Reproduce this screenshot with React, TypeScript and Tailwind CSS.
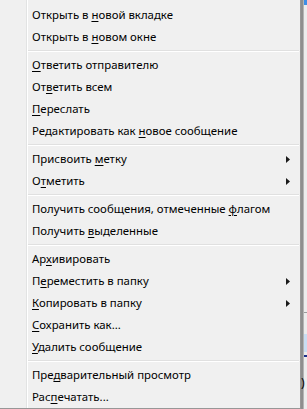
import React from "react";

type Item = { pre: string; key: string; post: string; sub?: boolean };

const groups: Item[][] = [
  [
    { pre: "Открыть в ", key: "н", post: "овой вкладке" },
    { pre: "Открыть в ", key: "н", post: "овом окне" },
  ],
  [
    { pre: "", key: "О", post: "тветить отправителю" },
    { pre: "От", key: "в", post: "етить всем" },
    { pre: "", key: "П", post: "ереслать" },
    { pre: "Редактировать как ", key: "н", post: "овое сообщение" },
  ],
  [
    { pre: "Присвоить ", key: "м", post: "етку", sub: true },
    { pre: "О", key: "т", post: "метить", sub: true },
  ],
  [
    { pre: "Получить сообщения, отмеченные ", key: "ф", post: "лагом" },
    { pre: "Получить ", key: "в", post: "ыделенные" },
  ],
  [
    { pre: "Ар", key: "х", post: "ивировать" },
    { pre: "П", key: "е", post: "реместить в папку", sub: true },
    { pre: "", key: "К", post: "опировать в папку", sub: true },
    { pre: "", key: "С", post: "охранить как..." },
    { pre: "", key: "У", post: "далить сообщение" },
  ],
  [
    { pre: "Пре", key: "д", post: "варительный просмотр" },
    { pre: "Рас", key: "п", post: "ечатать..." },
  ],
];

function Arrow() {
  return (
    <svg width="4" height="7" viewBox="0 0 4 7" className="ml-auto mr-[10px] shrink-0">
      <path d="M0 0L4 3.5L0 7Z" fill="#1a1a1a" />
    </svg>
  );
}

function Row({ it }: { it: Item }) {
  return (
    <div className="flex h-[22px] items-center pl-[4px] whitespace-nowrap">
      <span>
        {it.pre}
        <span className="underline underline-offset-[2px] decoration-[1px]">{it.key}</span>
        {it.post}
      </span>
      {it.sub && <Arrow />}
    </div>
  );
}

function Sep() {
  return (
    <div className="h-[6px] flex flex-col pr-[1px]">
      <div className="h-[2px]" />
      <div className="h-px bg-[#e0e0e0]" />
      <div className="h-px bg-white" />
    </div>
  );
}

export default function App() {
  return (
    <div
      className="flex w-[307px] h-[409px] overflow-hidden bg-[#e9e9e9] text-black"
      style={{ fontFamily: '"Noto Sans", "Open Sans", sans-serif' }}
    >
      <div className="flex w-[301px] h-[409px] shrink-0 bg-[#f0f0f0] border-r border-b border-[#979797]">
        <div className="w-[26px] shrink-0" />
        <div className="w-px shrink-0 bg-[#e2e3e3]" />
        <div className="w-px shrink-0 bg-white" />
        <div className="flex-1 flex flex-col pt-[4px] text-[11.4px] leading-[16px]">
          {groups.map((g, gi) => (
            <React.Fragment key={gi}>
              {gi > 0 && <Sep />}
              {g.map((it, ii) => (
                <Row key={ii} it={it} />
              ))}
            </React.Fragment>
          ))}
        </div>
      </div>
      <div className="w-[2px] shrink-0 bg-[#8e8e8e]" />
      <div className="w-[1px] shrink-0 bg-[#b4b4b4]" />
      <div className="flex-1 flex flex-col bg-[#ececec]">
        <div className="h-[5px] bg-[#3d8ee6]" />
        <div className="h-[307px]" />
        <div className="h-px bg-[#9a9a9a]" />
        <div className="h-[21px]" />
        <div className="h-[18px] bg-[#c9ddf2]" />
        <div className="h-[3px]" />
        <div className="h-[2px] bg-[#1c2f8a]" />
        <div className="h-[20px]" />
        <div className="text-[12px] leading-[12px] -ml-[3px]">)</div>
      </div>
    </div>
  );
}
